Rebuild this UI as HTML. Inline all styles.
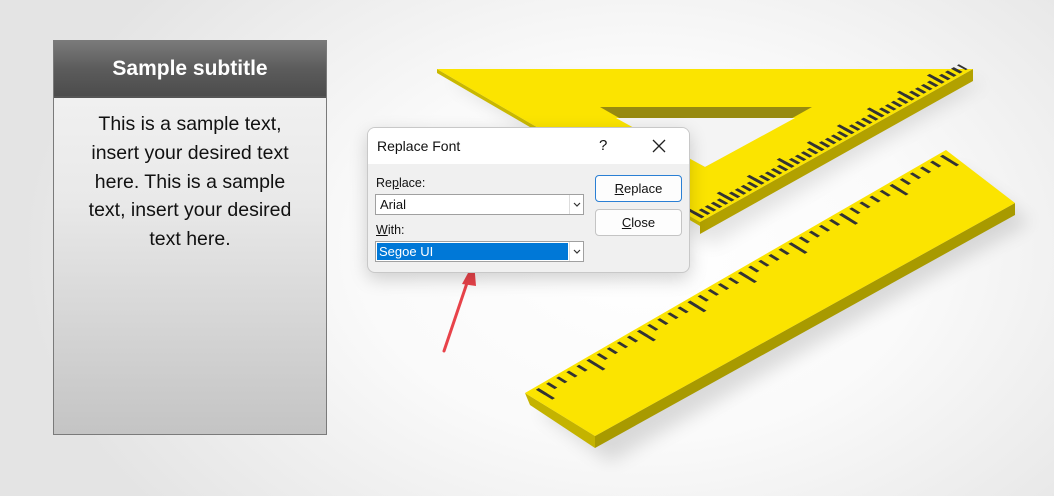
<!DOCTYPE html>
<html><head><meta charset="utf-8"><style>
*{margin:0;padding:0;box-sizing:border-box}
body{width:1054px;height:496px;overflow:hidden;position:relative;font-family:"Liberation Sans",sans-serif;
background:radial-gradient(ellipse 620px 420px at 640px 250px,#ffffff 0%,#fafafa 45%,#ececec 80%,#e4e4e4 100%)}
.panel{position:absolute;left:53px;top:40px;width:274px;height:395px;border:1.5px solid #7a7a7a;
background:linear-gradient(#f4f4f4 0%,#e9e9e9 40%,#c4c4c4 100%)}
.hdr{height:57px;background:linear-gradient(#7a7a7a,#5c5c5c 50%,#4c4c4c);border-bottom:2px solid #555;color:#fff;font-weight:bold;font-size:21px;text-align:center;line-height:56px}
.body{padding:12px 0 0;text-align:center;font-size:19.5px;line-height:28.8px;color:#111;white-space:nowrap}
svg{position:absolute;left:0;top:0}
.dlg{position:absolute;left:367px;top:127px;width:323px;height:146px;border:1px solid #c8c8c8;border-radius:8px;background:#f0f0f0;box-shadow:0 6px 18px rgba(0,0,0,.18);overflow:hidden;font-size:13px;color:#111}
.tb{height:36px;background:#fff;position:relative}
.tb .t{position:absolute;left:9px;top:10px;font-size:14px}
.tb .q{position:absolute;left:231px;top:9px;font-size:15px}
.lbl{position:absolute;left:8px;font-size:12.5px}
.cb{position:absolute;left:7px;width:209px;height:21px;border:1px solid #a0a0a0;background:#fff}
.cb span{position:absolute;left:2px;top:2px;padding:0 2px;height:15px;line-height:15px}
.cb i{position:absolute;right:0;top:0;width:14px;height:19px;border-left:1px solid #ddd;background:#fff}
.btn{position:absolute;left:227px;width:87px;height:27px;border:1px solid #c4c4c4;border-radius:4px;background:#fdfdfd;text-align:center;line-height:25px;font-size:13px}
u{text-decoration:underline}
</style></head><body>
<svg width="1054" height="496" viewBox="0 0 1054 496">
<defs><filter id="sh" x="-20%" y="-20%" width="140%" height="140%"><feGaussianBlur stdDeviation="9"/></filter></defs>
<polygon points="540,412 960,170 1030,222 610,462" fill="#000" opacity=".13" filter="url(#sh)"/>
<polygon points="450,80 985,82 712,245" fill="#000" opacity=".10" filter="url(#sh)"/>
<polygon points="973,69 973,81 700,234 700,222" fill="#b2a100"/>
<polygon points="437,69 437,73 700,226 700,222" fill="#c9b800"/>
<polygon points="437,69 973,69 700,222" fill="#fbe400"/>
<polygon points="600,107 812,107 705,167" fill="#978a10"/>
<polygon points="616,118 795,118 705,167" fill="#f4f4f4"/>
<g transform="matrix(2.73,-1.53,-0.876,-0.48,700,222)">
<line x1="1.5" y1="8" x2="99" y2="8" stroke="#333" stroke-width="10" stroke-dasharray="1.05 1.15"/>
<line x1="1.5" y1="11.5" x2="99" y2="11.5" stroke="#333" stroke-width="17" stroke-dasharray="1.05 9.95"/>
</g>
<polygon points="525,393 530,405 595,448 595,436" fill="#c4b300"/>
<polygon points="595,436 1015,203 1015,215 595,448" fill="#a89a00"/>
<polygon points="525,393 946,150 1015,203 595,436" fill="#fbe400"/>
<g transform="matrix(4.21,-2.43,0.854,0.524,525,393)">
<line x1="2" y1="8" x2="99" y2="8" stroke="#333" stroke-width="10" stroke-dasharray="0.65 1.75"/>
<line x1="2" y1="12.5" x2="99" y2="12.5" stroke="#333" stroke-width="19" stroke-dasharray="0.65 11.35"/>
</g>
<line x1="444" y1="351" x2="468" y2="280" stroke="#e8434a" stroke-width="3" stroke-linecap="round"/>
<polygon points="474,262 462,284 476,286" fill="#e8434a"/>
</svg>
<div class="panel"><div class="hdr">Sample subtitle</div>
<div class="body">This is a sample text,<br>insert your desired text<br>here. This is a sample<br>text, insert your desired<br>text here.</div></div>
<div class="dlg">
<div class="tb"><span class="t">Replace Font</span><span class="q">?</span>
<svg width="14" height="14" style="left:284px;top:11px"><path d="M1 1L13 13M13 1L1 13" stroke="#222" stroke-width="1.3"/></svg></div>
<div class="lbl" style="top:48px">Re<u>p</u>lace:</div>
<div class="cb" style="top:66px"><span>Arial</span><i><svg width="12" height="19" style="left:2px;top:0"><path d="M2 8L5 11L8 8" stroke="#333" fill="none" stroke-width="1.2"/></svg></i></div>
<div class="lbl" style="top:95px"><u>W</u>ith:</div>
<div class="cb" style="top:113px"><span style="background:#0078d7;color:#fff;left:1px;top:1px;width:191px;height:17px;line-height:17px">Segoe UI</span><i><svg width="12" height="19" style="left:2px;top:0"><path d="M2 8L5 11L8 8" stroke="#333" fill="none" stroke-width="1.2"/></svg></i></div>
<div class="btn" style="top:47px;border:1.5px solid #2a7fd4"><u>R</u>eplace</div>
<div class="btn" style="top:81px"><u>C</u>lose</div>
</div>
</body></html>
